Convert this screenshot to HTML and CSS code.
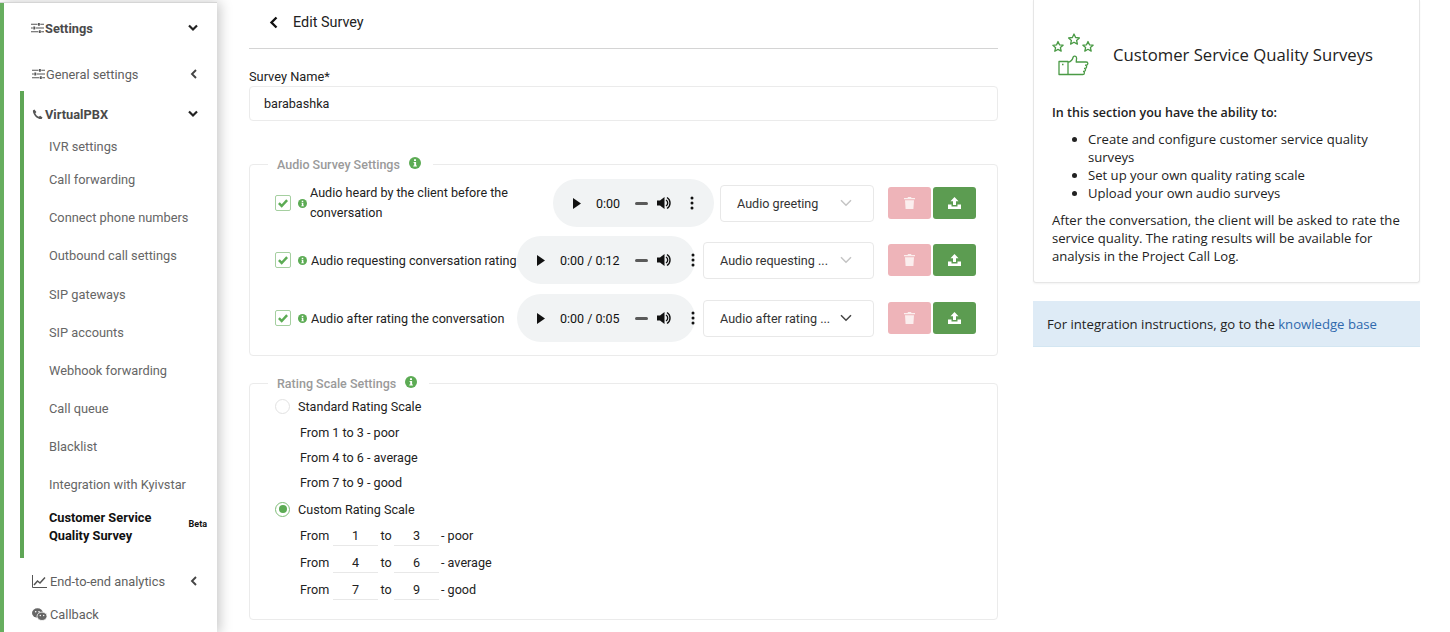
FILE: index.html
```html
<!DOCTYPE html>
<html lang="en">
<head>
<meta charset="utf-8">
<title>Edit Survey</title>
<link rel="stylesheet" href="styles.css">
</head>
<body>
<svg class="defs" width="0" height="0">
  <symbol id="i-sliders" viewBox="0 0 14 12"><path d="M0 2h7M10 2h4M0 6h2M5 6h9M0 10h8M11 10h3" fill="none" stroke="currentColor" stroke-width="1.200"/><path d="M7.500 .5h2v3h-2zM2.500 4.500h2v3h-2zM8.500 8.500h2v3h-2z" fill="currentColor"/></symbol>
  <symbol id="i-info" viewBox="0 0 12 12"><circle cx="6" cy="6" r="6" fill="#5cab54"/><path d="M5 2.200h2v1.700H5zM4.600 5h2.500v3.600h.8v1H4.300v-1h.9V6h-.6z" fill="#fff"/></symbol>
  <symbol id="i-check" viewBox="0 0 16 16"><path d="M3.300 8.200l3.200 3.200 6.200-6.600" fill="none" stroke="#5cab54" stroke-width="2.800"/></symbol>
  <symbol id="i-play" viewBox="0 0 8 11"><path d="M0 0l8 5.500L0 11z" fill="#111"/></symbol>
  <symbol id="i-vol" viewBox="0 0 14 14"><path d="M0 4.500h3L7.500 1v12L3 9.500H0z" fill="#111"/><path d="M9 4a3.500 3.500 0 0 1 0 6M10 1.500a6.500 6.500 0 0 1 0 11" fill="none" stroke="#111" stroke-width="1.400"/></symbol>
  <symbol id="i-dots" viewBox="0 0 4 14"><circle cx="2" cy="2" r="1.500" fill="#111"/><circle cx="2" cy="7" r="1.500" fill="#111"/><circle cx="2" cy="12" r="1.500" fill="#111"/></symbol>
  <symbol id="i-chev" viewBox="0 0 12 8"><path d="M1 1.200l5 5 5-5" fill="none" stroke="currentColor" stroke-width="1.500"/></symbol>
  <symbol id="i-trash" viewBox="0 0 11 12"><path d="M4 0h3l.5 1h3.500v1.300H0V1h3.500zM1 3.200h9l-.6 8.800H1.600z" fill="#fbeeee"/></symbol>
  <symbol id="i-upload" viewBox="0 0 13 12"><path d="M6.500 0l4 4.200H8V8H5V4.200H2.500zM0 7.500h3.500v2h6v-2H13V12H0z" fill="#fff"/></symbol>
  <symbol id="i-down" viewBox="0 0 10 8"><path d="M1 1.500l4 4 4-4" fill="none" stroke="currentColor" stroke-width="2.200"/></symbol>
  <symbol id="i-left" viewBox="0 0 8 10"><path d="M6 1L2 5l4 4" fill="none" stroke="currentColor" stroke-width="1.900"/></symbol>
</svg>

<div class="page">
  <nav class="sidebar">
    <div class="nav-head nav-settings">
      <svg class="ico-slide"><use href="#i-sliders"/></svg><b>Settings</b>
      <svg class="caret"><use href="#i-down"/></svg>
    </div>
    <div class="nav-head nav-general">
      <svg class="ico-slide"><use href="#i-sliders"/></svg><span>General settings</span>
      <svg class="caret-left"><use href="#i-left"/></svg>
    </div>
    <div class="group">
      <div class="nav-head nav-pbx">
        <svg class="ico-phone" viewBox="0 0 12 12"><path d="M2.600.5L1 1.500C.6 5.500 5.500 11.500 10.500 11l1-1.800L8.800 7.400 7.500 8.500C6 8 4 6 3.600 4.500l1.200-1.300z" fill="currentColor"/></svg><b>VirtualPBX</b>
        <svg class="caret"><use href="#i-down"/></svg>
      </div>
      <a class="sub sub-short">IVR settings</a>
      <a class="sub">Call forwarding</a>
      <a class="sub">Connect phone numbers</a>
      <a class="sub">Outbound call settings</a>
      <a class="sub sub-gap">SIP gateways</a>
      <a class="sub">SIP accounts</a>
      <a class="sub">Webhook forwarding</a>
      <a class="sub">Call queue</a>
      <a class="sub">Blacklist</a>
      <a class="sub">Integration with Kyivstar</a>
      <a class="sub-active"><span>Customer Service<br>Quality Survey</span><small>Beta</small></a>
    </div>
    <div class="nav-head nav-e2e">
      <svg class="ico-chart" viewBox="0 0 15 13"><path d="M.5 0v12.500H15" fill="none" stroke="currentColor"/><path d="M2 10l3.500-4 2.500 2 5-5.500" fill="none" stroke="currentColor" stroke-width="1.500"/></svg><span>End-to-end analytics</span>
      <svg class="caret-left"><use href="#i-left"/></svg>
    </div>
    <div class="nav-head nav-callback">
      <svg class="ico-chat" viewBox="0 0 15 13"><ellipse cx="5.500" cy="5" rx="5.500" ry="4.700" fill="currentColor"/><ellipse cx="10" cy="8.300" rx="5" ry="4.200" fill="currentColor" stroke="#fff" stroke-width=".8"/><circle cx="3.700" cy="3.800" r=".8" fill="#fff"/><circle cx="7" cy="3.800" r=".8" fill="#fff"/><circle cx="8.300" cy="7.500" r=".7" fill="#fff"/><circle cx="11.700" cy="7.500" r=".7" fill="#fff"/></svg><span>Callback</span>
    </div>
  </nav>

  <main class="main">
    <header class="title-bar">
      <svg class="back"><use href="#i-left"/></svg>
      <h1>Edit Survey</h1>
    </header>
    <label class="field-label">Survey Name*</label>
    <div class="text-input">barabashka</div>

    <fieldset class="card card-audio">
      <legend>Audio Survey Settings <svg class="info-lg"><use href="#i-info"/></svg></legend>

      <div class="audio-row">
        <span class="checkbox"><svg><use href="#i-check"/></svg></span>
        <svg class="info-sm"><use href="#i-info"/></svg>
        <span class="audio-label audio-label-tight">Audio heard by the client before the conversation</span>
        <div class="player player-short">
          <svg class="p-play"><use href="#i-play"/></svg><span class="p-time">0:00</span><i class="p-dash"></i><svg class="p-vol"><use href="#i-vol"/></svg><svg class="p-dots"><use href="#i-dots"/></svg>
        </div>
        <div class="select select-short select-off"><span>Audio greeting</span><svg><use href="#i-chev"/></svg></div>
        <button class="btn btn-del"><svg><use href="#i-trash"/></svg></button>
        <button class="btn btn-up"><svg><use href="#i-upload"/></svg></button>
      </div>

      <div class="audio-row">
        <span class="checkbox"><svg><use href="#i-check"/></svg></span>
        <svg class="info-sm"><use href="#i-info"/></svg>
        <span class="audio-label">Audio requesting conversation rating</span>
        <div class="player">
          <svg class="p-play"><use href="#i-play"/></svg><span class="p-time">0:00 / 0:12</span><i class="p-dash"></i><svg class="p-vol"><use href="#i-vol"/></svg><svg class="p-dots"><use href="#i-dots"/></svg>
        </div>
        <div class="select select-off"><span>Audio requesting ...</span><svg><use href="#i-chev"/></svg></div>
        <button class="btn btn-del"><svg><use href="#i-trash"/></svg></button>
        <button class="btn btn-up"><svg><use href="#i-upload"/></svg></button>
      </div>

      <div class="audio-row audio-row-last">
        <span class="checkbox"><svg><use href="#i-check"/></svg></span>
        <svg class="info-sm"><use href="#i-info"/></svg>
        <span class="audio-label">Audio after rating the conversation</span>
        <div class="player">
          <svg class="p-play"><use href="#i-play"/></svg><span class="p-time">0:00 / 0:05</span><i class="p-dash"></i><svg class="p-vol"><use href="#i-vol"/></svg><svg class="p-dots"><use href="#i-dots"/></svg>
        </div>
        <div class="select"><span>Audio after rating ...</span><svg><use href="#i-chev"/></svg></div>
        <button class="btn btn-del"><svg><use href="#i-trash"/></svg></button>
        <button class="btn btn-up"><svg><use href="#i-upload"/></svg></button>
      </div>
    </fieldset>

    <fieldset class="card card-rating">
      <legend>Rating Scale Settings <svg class="info-lg"><use href="#i-info"/></svg></legend>
      <div class="radio-row"><span class="radio"></span>Standard Rating Scale</div>
      <div class="plain-row">From 1 to 3 - poor</div>
      <div class="plain-row">From 4 to 6 - average</div>
      <div class="plain-row">From 7 to 9 - good</div>
      <div class="radio-row radio-row-on"><span class="radio radio-on"></span>Custom Rating Scale</div>
      <div class="scale-row"><span class="from">From</span><span class="num">1</span><span class="to">to</span><span class="num">3</span><span class="word">- poor</span></div>
      <div class="scale-row"><span class="from">From</span><span class="num">4</span><span class="to">to</span><span class="num">6</span><span class="word">- average</span></div>
      <div class="scale-row"><span class="from">From</span><span class="num">7</span><span class="to">to</span><span class="num">9</span><span class="word">- good</span></div>
    </fieldset>
  </main>

  <aside class="aside">
    <section class="help">
      <div class="help-head">
        <svg class="help-ico" viewBox="0 0 44 44" fill="none" stroke="#4a9a45" stroke-width="1.300" stroke-linejoin="round">
          <path d="M6 8.500l1.500 3.300 3.600.4-2.700 2.400.8 3.500L6 16.400l-3.200 1.800.8-3.500-2.700-2.400 3.600-.4z"/>
          <path d="M22 1l1.600 3.500 3.800.4-2.800 2.500.8 3.700-3.400-1.900-3.400 1.900.8-3.700-2.800-2.500 3.800-.4z"/>
          <path d="M36 8.500l1.500 3.300 3.600.4-2.700 2.400.8 3.500-3.200-1.800-3.200 1.800.8-3.500-2.700-2.400 3.600-.4z"/>
          <path d="M7 28.500h9v13H7zM16 29.500c3-1 4.500-2.500 5-5 .4-2.200 3.800-1.800 3.600 .8l-.4 3.700h10c2.200 0 2.200 3.200 0 3.200h-1.200M33 32.200c2.200 0 2.200 3.100 0 3.100h-1M32 35.300c2.100 0 2.100 3 0 3h-1M31 38.300c1.900 0 1.900 3.200-.2 3.200H16"/>
          <path d="M10 31.500h1.500"/>
        </svg>
        <h2>Customer Service Quality Surveys</h2>
      </div>
      <p class="help-lead">In this section you have the ability to:</p>
      <ul>
        <li>Create and configure customer service quality surveys</li>
        <li>Set up your own quality rating scale</li>
        <li>Upload your own audio surveys</li>
      </ul>
      <p class="help-text">After the conversation, the client will be asked to rate the service quality. The rating results will be available for analysis in the Project Call Log.</p>
    </section>
    <div class="notice"><span>For integration instructions, go to the <a class="link">knowledge base</a></span></div>
  </aside>
</div>
</body>
</html>
```

FILE: styles.css
```css
* { box-sizing: border-box; }
html, body { margin: 0; height: 632px; overflow: hidden; background: #fff; }
body { font-family: Roboto, "Liberation Sans", sans-serif; font-size: 12.6px; color: #222; }
.defs { position: absolute; }
svg { display: block; flex: none; }

.page { display: flex; height: 632px; overflow: hidden; }

/* Sidebar */
.sidebar {
  width: 217px; height: 632px; flex: none;
  margin-top: 2px;
  border-top: 1px solid #d5d5d5;
  background: linear-gradient(#67ae5f, #67ae5f) left / 4px 100% no-repeat #fff;
  box-shadow: 3px 0 12px rgba(0,0,0,.22);
  color: #5f5f5f;
  font-size: 12.8px;
}
.nav-head { display: flex; align-items: center; height: 20px; }
.nav-head b { color: #4a4a4a; font-weight: 700; }
.nav-settings { margin: 15px 0 0 31px; }
.nav-general { margin: 26px 0 0 32px; }
.ico-slide { width: 13px; height: 12px; margin-right: 1px; color: #555; }
.caret { width: 10px; height: 8px; margin-left: auto; margin-right: 19px; color: #222; }
.caret-left { width: 8px; height: 10px; margin-left: auto; margin-right: 19px; color: #444; }

.group {
  margin: 7px 0 0 20px; height: 467px; padding-top: 13px;
  border-left: 4px solid #5fa656;
}
.nav-pbx { margin-left: 8px; }
.ico-phone { width: 11px; height: 11px; margin-right: 2px; color: #555; }
.sub { display: flex; align-items: center; height: 38px; padding-left: 25px; color: #666; }
.sub-short { height: 28px; margin-top: 8px; }
.sub-gap { margin-top: 1px; }
.sub-active {
  display: flex; align-items: center; justify-content: space-between;
  padding: 6px 10px 0 25px; color: #111; font-weight: 700; line-height: 18px;
}
.sub-active small { font-size: 9px; line-height: 11px; margin-top: -5px; }
.nav-e2e { margin: 13px 0 0 32px; }
.ico-chart { width: 15px; height: 13px; margin-right: 3px; color: #555; }
.nav-callback { margin: 13px 0 0 32px; }
.ico-chat { width: 15px; height: 13px; margin-right: 3px; color: #666; }

/* Main */
.main { width: 749px; flex: none; margin-left: 32px; }
.title-bar {
  display: flex; align-items: center; height: 49px;
  padding: 0 0 4px 20px;
  border-bottom: 1px solid #d4d4d4;
}
.back { width: 10px; height: 13px; color: #111; }
.title-bar h1 { margin: 0 0 0 14px; font-size: 14.4px; font-weight: 400; color: #222; }
.field-label { display: block; margin-top: 20px; line-height: 16px; font-size: 12.8px; color: #222; }
.text-input {
  height: 35px; margin-top: 1px; padding-left: 14px;
  display: flex; align-items: center;
  border: 1px solid #ebebeb; border-radius: 4px;
}

.card { margin: 0; padding: 0; min-width: 0; border: 1px solid #ebebeb; border-radius: 4px; }
.card legend {
  display: flex; align-items: center; gap: 9px;
  margin-left: -7px; padding: 0 12px 0 9px; height: 18px;
  font-weight: 500; font-size: 12.5px; color: #9a9a9a;
}
.info-lg { width: 12px; height: 12px; margin-top: -3px; }
.card-audio { margin-top: 34px; height: 201px; padding: 6px 21px 0 25px; }
.card-rating { margin-top: 18px; height: 246px; padding-left: 25px; }

.audio-row { display: flex; align-items: center; height: 48px; margin-bottom: 9px; }
.audio-row-last { margin-top: 10px; }
.checkbox {
  width: 16px; height: 16px; flex: none;
  border: 1px solid #a5cfa0; border-radius: 2px; margin-right: 7px;
}
.checkbox svg { width: 14px; height: 14px; }
.info-sm { width: 9px; height: 9px; margin-right: 4px; }
.audio-label { flex: 1; min-width: 0; padding-top: 1px; line-height: 20px; color: #222; white-space: nowrap; }
.audio-label-tight { white-space: normal; padding: 0 35px 0 0; margin-left: -1px; }

.player {
  display: flex; align-items: center; width: 178px; height: 48px; flex: none;
  padding-left: 20px; border-radius: 24px; background: #f1f3f4;
  font-size: 12.5px; color: #111;
}
.player-short { width: 161px; }
.p-play { width: 8px; height: 11px; }
.p-time { margin-left: 15px; min-width: 61px; white-space: nowrap; }
.player-short .p-time { min-width: 25px; }
.p-dash { width: 13px; height: 3px; margin-left: 14px; border-radius: 2px; background: #5a5a5a; }
.p-vol { width: 14px; height: 14px; margin-left: 9px; }
.p-dots { width: 4px; height: 14px; margin-left: 20px; }
.player-short .p-dots { margin-left: 19px; }

.select {
  display: flex; align-items: center; justify-content: space-between;
  width: 171px; height: 37px; flex: none; margin-left: 8px; margin-right: 14px;
  padding: 0 21px 0 16px;
  border: 1px solid #e8e8e8; border-radius: 4px; color: #333;
  white-space: nowrap;
}
.select svg { width: 12px; height: 8px; color: #444; }
.select-off svg { color: #c4c4c4; }
.select-short { width: 154px; margin-left: 6px; }

.btn {
  display: flex; align-items: center; justify-content: center;
  width: 43px; height: 32px; flex: none; padding: 0;
  border: 0; border-radius: 3px;
}
.btn svg { width: 13px; height: 12px; }
.btn-del { background: #eeb4b9; margin-right: 2px; }
.btn-del svg { width: 11px; }
.btn-up { background: #5c9c51; }

.radio-row { display: flex; align-items: center; height: 20px; margin: 4px 0 4px; color: #222; }
.radio-row-on { margin: 4px 0 3px; }
.radio {
  width: 15px; height: 15px; flex: none; margin-right: 8px;
  border: 1px solid #e2e2e2; border-radius: 50%;
  display: flex; align-items: center; justify-content: center;
}
.radio-on { border-color: #7fbd78; }
.radio-on::after { content: ""; width: 8px; height: 8px; border-radius: 50%; background: #5cab54; }
.plain-row { height: 25px; padding-left: 25px; line-height: 25px; }
.scale-row { display: flex; align-items: center; height: 27px; padding-left: 25px; }
.from { width: 33px; }
.num {
  width: 45px; height: 20px; line-height: 20px; text-align: center;
  border-bottom: 1px solid #e8e8e8; margin-top: 1px;
}
.to { width: 16px; text-align: center; }
.word { margin-left: 2px; }

/* Aside */
.aside { width: 387px; flex: none; margin-left: 35px; font-family: "Open Sans", "Liberation Sans", sans-serif; color: #222; }
.help {
  height: 283px; padding: 0 19px 0 18px;
  border: 1px solid #e6e6e6; border-top: 0; border-radius: 0 0 3px 3px;
  box-shadow: 0 1px 2px rgba(0,0,0,.05);
  font-size: 13.1px; line-height: 18px;
}
.help-head { display: flex; align-items: center; height: 94px; padding-top: 16px; }
.help-ico { width: 44px; height: 44px; margin-right: 17px; }
.help h2 { margin: 0; font-size: 16.7px; font-weight: 400; color: #222; }
.help-lead { margin: 10px 0 0; font-weight: 600; font-size: 12.5px; }
.help ul { margin: 8px 0 0; padding: 0 0 0 36px; }
.help-text { margin: 9px 0 0; }
.notice {
  height: 46px; margin-top: 18px; padding-left: 14px;
  display: flex; align-items: center;
  background: #deebf6; border-bottom: 1px solid #d3e6f2;
  font-size: 13.15px;
}
.link { color: #2f69ad; }
```
